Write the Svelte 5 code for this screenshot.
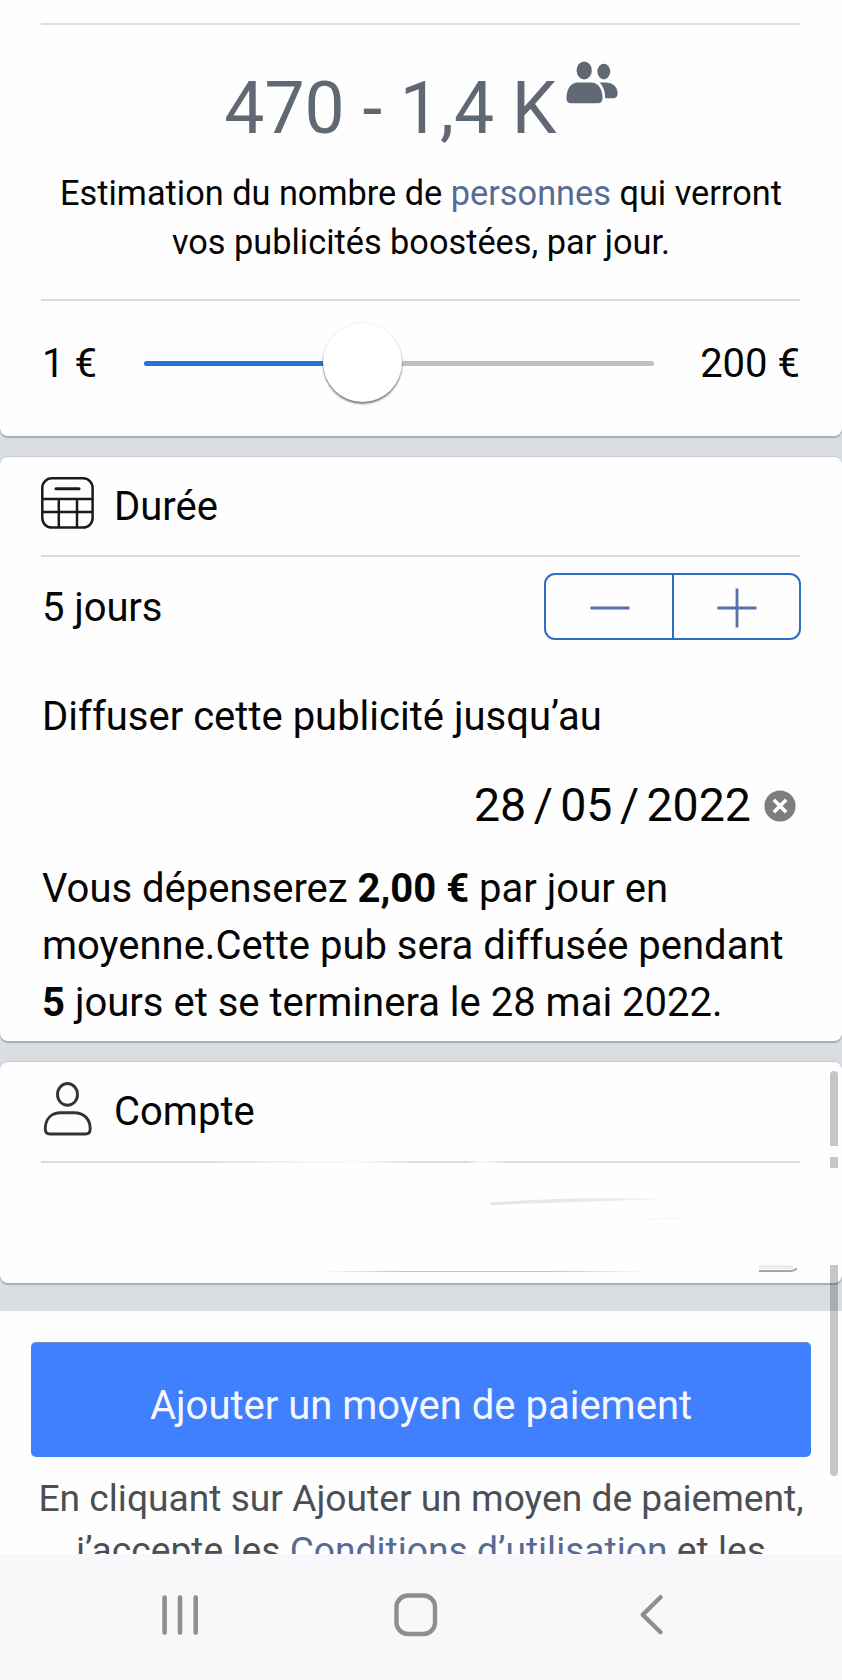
<script>
  const min = 1;
  const max = 200;
  const fill = 43;
  let days = $state(5);
</script>

<div class="screen">
  <main>
    <section class="card budget">
      <hr />
      <div class="estimate">
        <div class="reach">
          <span class="range">470 - 1,4 K</span>
          <svg class="people" width="52" height="43" viewBox="0 0 52 43" fill="#606873">
            <ellipse cx="18.2" cy="9.4" rx="7.6" ry="9" />
            <ellipse cx="37.8" cy="10.6" rx="6.4" ry="7.8" />
            <path d="M0.5 37.500C0.500 28 4.500 21.500 12 21.500H25C32.500 21.500 36.500 28 36.500 37.500C36.500 40.500 34.500 42.200 32 42.200H5C2.200 42.200 0.500 40.500 0.500 37.500Z" />
            <path d="M33.500 21.500H39C47 21.500 51.600 26 51.600 32.500C51.600 35.500 50 37.200 47 37.200H39.200C39 30.500 37.500 25.500 33.500 21.500Z" />
          </svg>
        </div>
        <p>Estimation du nombre de <a href="#personnes">personnes</a> qui verront<br />vos publicités boostées, par jour.</p>
      </div>
      <hr />
      <div class="slider-row">
        <span class="bound">{min} €</span>
        <div class="track">
          <div class="fill" style="width: {fill}%"></div>
          <div class="thumb" style="left: {fill}%"></div>
        </div>
        <span class="bound">{max} €</span>
      </div>
    </section>

    <section class="card duration">
      <header>
        <svg width="53" height="52" viewBox="0 0 53 52" fill="none" stroke="#1b1b1b" stroke-width="2.500">
          <rect x="1.300" y="1.300" width="50.300" height="49.300" rx="9.500" />
          <path d="M15 11.800H38" stroke-width="3" stroke-linecap="round" />
          <path d="M1.500 22H51.500M1.500 35H51.500M17.800 22V50.500M36 22V50.500" />
        </svg>
        <h2>Durée</h2>
      </header>
      <hr />
      <div class="days">
        <span>{days} jours</span>
        <div class="stepper">
          <button aria-label="Moins" onclick={() => (days = Math.max(1, days - 1))}>
            <svg width="40" height="40" viewBox="0 0 40 40" stroke="#5673ab" stroke-width="2.800"><path d="M0.500 20H39.500" /></svg>
          </button>
          <button aria-label="Plus" onclick={() => (days += 1)}>
            <svg width="40" height="40" viewBox="0 0 40 40" stroke="#5673ab" stroke-width="2.800"><path d="M0.500 20H39.500M20 0.500V39.500" /></svg>
          </button>
        </div>
      </div>
      <div class="until">Diffuser cette publicité jusqu’au</div>
      <div class="date">
        <span class="value"><span>28</span><span>/</span><span>05</span><span>/</span><span>2022</span></span>
        <svg width="32" height="32" viewBox="0 0 32 32">
          <circle cx="16" cy="16" r="15.600" fill="#7d7d7d" />
          <path d="M9.800 9.800L22.200 22.200M22.200 9.800L9.800 22.200" stroke="#fff" stroke-width="3.600" />
        </svg>
      </div>
      <p class="summary">Vous dépenserez <b>2,00 €</b> par jour en<br />moyenne.Cette pub sera diffusée pendant<br /><b>5</b> jours et se terminera le 28 mai 2022.</p>
    </section>

    <section class="card account">
      <header>
        <svg width="53" height="54" viewBox="0 0 53 54" fill="none" stroke="#333" stroke-width="2.900">
          <ellipse cx="26.500" cy="12.400" rx="10" ry="10.900" />
          <path d="M4.300 47C4.300 37 10 30.800 20 30.800H33C43 30.800 49.200 37 49.200 47C49.200 50.500 47.500 52 44.500 52H9C6 52 4.300 50.500 4.300 47Z" />
        </svg>
        <h2>Compte</h2>
      </header>
      <hr />
      <svg class="traces" width="842" height="119" viewBox="0 1 842 119" fill="none">
        <defs>
          <linearGradient id="lower" x1="318" x2="650" y1="0" y2="0" gradientUnits="userSpaceOnUse">
            <stop offset="0" stop-color="#c4c4c4" stop-opacity="0" />
            <stop offset="0.250" stop-color="#c4c4c4" />
            <stop offset="0.700" stop-color="#c4c4c4" />
            <stop offset="1" stop-color="#c4c4c4" stop-opacity="0" />
          </linearGradient>
          <linearGradient id="stroke" x1="490" x2="655" y1="0" y2="0" gradientUnits="userSpaceOnUse">
            <stop offset="0" stop-color="#e6e6ea" />
            <stop offset="0.700" stop-color="#e9e9ee" />
            <stop offset="1" stop-color="#f6f6f8" />
          </linearGradient>
        </defs>
        <path d="M490 41Q575 35 655 37Q570 39.500 492 42.500Z" fill="url(#stroke)" stroke="url(#stroke)" />
        <path d="M645 57.500Q665 56 686 56" stroke="#f5f5f7" />
        <path d="M412 36H462" stroke="#f9f9f9" />
        <rect x="318" y="109" width="332" height="1" fill="url(#lower)" />
        <path d="M759 105H793" stroke="#ececf1" stroke-width="4" />
        <path d="M759 109H790Q794 109 797 106.500" stroke="#a6a6aa" stroke-width="2" />
      </svg>
    </section>

    <footer>
      <button class="pay">Ajouter un moyen de paiement</button>
      <p>En cliquant sur Ajouter un moyen de paiement,<br />j’accepte les <a href="#conditions">Conditions d’utilisation</a> et les</p>
    </footer>
  </main>

  <nav>
    <svg width="842" height="44" viewBox="0 0 842 44" fill="none" stroke="#8e8e90">
      <path d="M164.600 4.500V39.500M180 4.500V39.500M195.700 4.500V39.500" stroke-width="4.600" stroke-linecap="round" />
      <rect x="396.500" y="2.500" width="38.500" height="38.500" rx="11.500" stroke-width="4.400" />
      <path d="M660.500 4.200L642.700 21.700L660.500 39.200" stroke-width="4.400" stroke-linecap="round" stroke-linejoin="round" />
    </svg>
  </nav>

  <div class="scroll top"></div>
  <div class="scroll middle"></div>
  <div class="scroll bottom"></div>
</div>

<style>
  :global(body) { margin: 0; }
  .screen {
    position: relative;
    display: flex;
    flex-direction: column;
    width: 842px;
    height: 1680px;
    overflow: hidden;
    background: #dadde2;
    color: #050505;
    font: 40px/57px Roboto, sans-serif;
  }
  main {
    display: flex;
    flex-direction: column;
    height: 1554px;
    overflow: hidden;
  }
  h2, p { margin: 0; font: inherit; }
  a { color: #576b95; text-decoration: none; }
  hr {
    flex: none;
    width: 759px;
    height: 2px;
    margin: 0;
    border: 0;
    background: #dcdcdc;
  }
  .card {
    display: flex;
    flex: none;
    flex-direction: column;
    box-sizing: border-box;
    padding: 0 41px;
    border-radius: 8px;
    background: #fefefe;
    box-shadow: 0 2px 1px #a9adb1, 0 -1px 1px #c6c9cd;
  }
  .budget {
    height: 436px;
    margin-bottom: 21px;
    padding-top: 23px;
    border-radius: 0 0 8px 8px;
  }
  .estimate { height: 274px; text-align: center; }
  .reach {
    display: flex;
    box-sizing: border-box;
    align-items: flex-start;
    justify-content: center;
    gap: 9px;
    padding-top: 35px;
    height: 144px;
    color: #606873;
  }
  .range { padding-top: 9px; font-size: 71.400px; line-height: 80px; }
  .people { margin-top: 1px; }
  .estimate p { font-size: 34.300px; line-height: 49.300px; white-space: nowrap; }
  .slider-row {
    display: flex;
    align-items: center;
    justify-content: space-between;
    height: 124px;
    padding: 0 1px;
  }
  .track {
    position: relative;
    width: 510px;
    height: 5px;
    border-radius: 3px;
    background: #bcc0c5;
  }
  .fill { height: 5px; border-radius: 3px; background: #2374d4; }
  .thumb {
    position: absolute;
    top: -38px;
    width: 79px;
    height: 79px;
    margin-left: -39.500px;
    border-radius: 50%;
    background: #fff;
    box-shadow: 0 2px 2px rgba(0, 0, 0, 0.5), 0 0 2px rgba(0, 0, 0, 0.12);
  }
  .duration { height: 584px; margin-bottom: 21px; }
  header {
    display: flex;
    align-items: center;
    gap: 20px;
    height: 98px;
  }
  header svg { margin-bottom: 6px; }
  .days {
    display: flex;
    align-items: center;
    justify-content: space-between;
    height: 99px;
  }
  .days > span { padding: 2px 0 0 1px; letter-spacing: -0.1px; }
  .stepper {
    display: flex;
    box-sizing: border-box;
    width: 257px;
    height: 67px;
    margin-right: 0;
    border: 2px solid #2a6fc5;
    border-radius: 11px;
  }
  .stepper button {
    display: flex;
    flex: 1;
    align-items: center;
    justify-content: center;
    padding: 2px 0 0 2px;
    border: 0;
    background: none;
  }
  .stepper button + button { border-left: 2px solid #2a6fc5; }
  .until { padding: 32px 0 30px 1px; }
  .date {
    display: flex;
    align-items: center;
    justify-content: flex-end;
    gap: 13px;
    height: 61px;
    padding-right: 5px;
    font-size: 46.500px;
  }
  .value { display: flex; gap: 7.400px; }
  .summary { padding: 24px 0 0 1px; line-height: 57.100px; white-space: nowrap; }
  b { font-weight: 700; }
  .account { height: 221px; padding: 0; }
  .account header { height: 99px; padding: 0 41px; }
  .account header svg { margin-bottom: 6px; }
  .account hr {
    margin: 0 41px;
    background: linear-gradient(90deg, #dcdcdc 20%, #f4f4f4 34%, #fafafa 42%, #dcdcdc 50%, #dcdcdc 56%, #fafafa 58%, #dcdcdc 62%);
  }
  .traces { height: 119px; }
  footer {
    flex: none;
    height: 269px;
    margin-top: 28px;
    padding: 31px 31px 0;
    background: #fefefe;
    text-align: center;
    color: #4b4f54;
  }
  .pay {
    width: 780px;
    height: 115px;
    padding: 11px 0 0;
    border: 0;
    border-top: 1px solid #6f8fc9;
    border-radius: 5px;
    background: #4080ff;
    color: #f5f8ff;
    font: inherit;
    vertical-align: top;
  }
  footer p { padding-top: 15px; font-size: 37.200px; line-height: 52px; white-space: nowrap; }
  nav {
    display: flex;
    align-items: center;
    box-sizing: border-box;
    height: 126px;
    padding-bottom: 5px;
    background: #f8f8fb;
  }
  .scroll {
    position: absolute;
    left: 830px;
    width: 8px;
    background: rgba(0, 0, 0, 0.22);
  }
  .top { top: 1071px; height: 75px; border-radius: 4px 4px 0 0; }
  .middle { top: 1157px; height: 11px; }
  .bottom { top: 1265px; height: 211px; border-radius: 0 0 4px 4px; }
</style>
